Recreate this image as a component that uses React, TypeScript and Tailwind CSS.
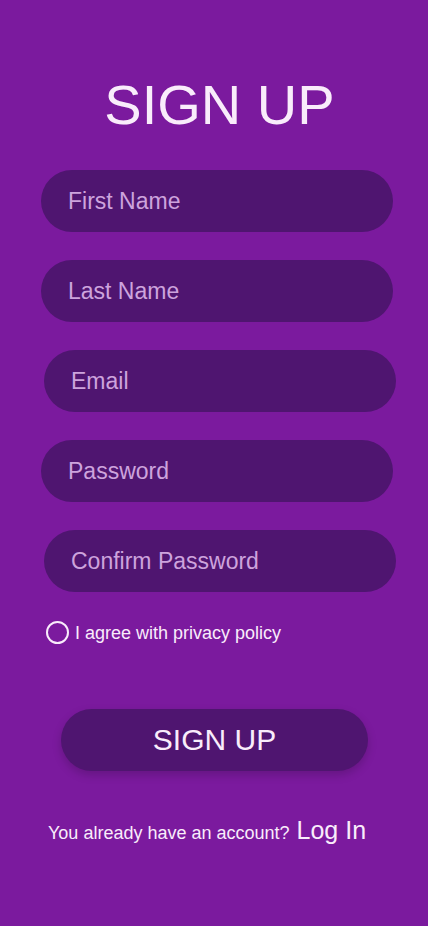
import React, { useState } from "react";

const fields = [
  { name: "firstName", label: "First Name", type: "text", shift: false },
  { name: "lastName", label: "Last Name", type: "text", shift: false },
  { name: "email", label: "Email", type: "email", shift: true },
  { name: "password", label: "Password", type: "password", shift: false },
  { name: "confirm", label: "Confirm Password", type: "password", shift: true },
];

export default function App() {
  const [agree, setAgree] = useState(false);

  return (
    <div
      className="min-h-[926px] w-full bg-[#7b1a9e] text-[#f9ecfb]"
      style={{ fontFamily: '"Liberation Sans", Arial, sans-serif' }}
    >
      <form className="flex flex-col pt-[77px]" onSubmit={(e) => e.preventDefault()}>
        <h1 className="text-center text-[56px] leading-none font-normal pl-[11px]">SIGN UP</h1>

        <div className="mt-[37px] flex flex-col gap-[28px]">
          {fields.map((f) => (
            <input
              key={f.name}
              type={f.type}
              placeholder={f.label}
              className={`h-[62px] w-[352px] rounded-full bg-[#4f1570] pl-[27px] pr-6 text-[23px] text-white outline-none placeholder:text-[#cda3dd] ${
                f.shift ? "ml-[44px]" : "ml-[41px]"
              }`}
            />
          ))}
        </div>

        <label className="ml-[46px] mt-[29px] flex cursor-pointer items-center gap-[6px]">
          <span
            className="flex h-[23px] w-[23px] items-center justify-center rounded-full border-2 border-[#f9ecfb]"
            onClick={() => setAgree(!agree)}
          >
            {agree && <span className="h-[11px] w-[11px] rounded-full bg-[#f9ecfb]" />}
          </span>
          <span className="text-[18px] leading-none">I agree with privacy policy</span>
        </label>

        <button
          type="submit"
          className="ml-[61px] mt-[65px] h-[62px] w-[307px] rounded-full bg-[#4f1570] text-[30px] leading-none shadow-[0_4px_10px_rgba(0,0,0,0.18)]"
        >
          SIGN UP
        </button>

        <p className="ml-[48px] mt-[47px] flex items-baseline gap-[7px] leading-none">
          <span className="text-[18px]">You already have an account?</span>
          <a href="#" className="text-[25px]">
            Log In
          </a>
        </p>
      </form>
    </div>
  );
}
